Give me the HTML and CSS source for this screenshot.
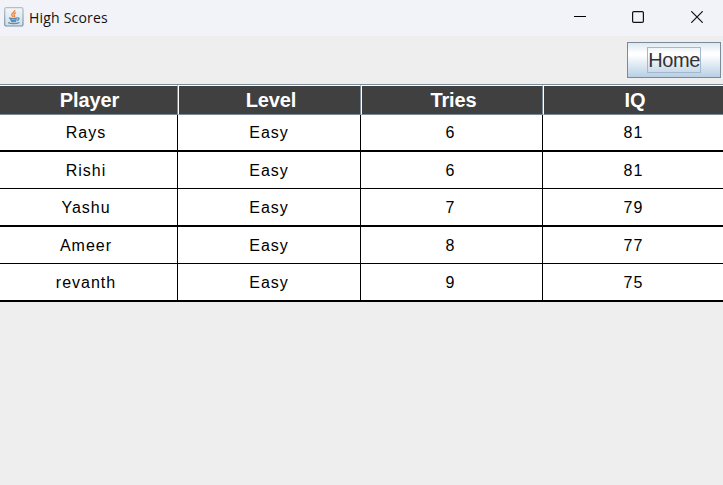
FILE: index.html
```html
<!DOCTYPE html>
<html lang="en">
<head>
<meta charset="utf-8">
<title>High Scores</title>
<link rel="stylesheet" href="styles.css">
</head>
<body>
<header class="titlebar">
  <svg class="app-icon" width="20" height="20" viewBox="0 0 20 20">
    <defs>
      <linearGradient id="tile" x1="0" y1="0" x2="0" y2="1"><stop offset="0" stop-color="#f4f6f7"/><stop offset="1" stop-color="#d3dee6"/></linearGradient>
      <linearGradient id="edge" x1="0" y1="0" x2="0" y2="1"><stop offset="0" stop-color="#b4bfc7"/><stop offset="1" stop-color="#6f94af"/></linearGradient>
    </defs>
    <rect x=".7" y=".7" width="18.3" height="18.3" rx="1.6" fill="url(#tile)" stroke="url(#edge)" stroke-width="1.2"/>
    <path d="M10.700 3c.7 2-3.400 2.900-2.900 5 .1.900 1.100 1.500 1.500 2.200M12 5.600c-1.800.8-2.500 1.600-1.700 2.700.6.800.3 1.400-.3 1.900" fill="none" stroke="#ec8b43" stroke-width="1.500"/>
    <path d="M5 10.800c2 .9 6 .9 8.300 0M6 12.700c2 .8 4.600.8 6.800 0M7 14.200c1.600.6 3.600.6 5.200 0M13.300 11c2.500-.8 2.200 2-.2 2.500M4.200 15.600c3 1.500 8.300 1.400 11.300-.1" fill="none" stroke="#5b8cb4" stroke-width="1.300"/>
  </svg>
  <h1 class="title">High Scores</h1>
  <div class="controls">
    <svg width="12" height="12" viewBox="0 0 12 12"><path d="M0 5.500h12" stroke="#000"/></svg>
    <svg width="12" height="12" viewBox="0 0 12 12"><rect x=".6" y=".6" width="10.800" height="10.800" rx="1.200" fill="none" stroke="#111" stroke-width="1.200"/></svg>
    <svg width="12" height="12" viewBox="0 0 12 12"><path d="M.3.300l11.400 11.400M11.700.300L.3 11.700" stroke="#111" stroke-width="1.200"/></svg>
  </div>
</header>
<nav class="toolbar"><button class="home"><span class="home-label">Home</span></button></nav>
<main class="scores">
  <div class="row head"><span>Player</span><span>Level</span><span>Tries</span><span>IQ</span></div>
  <div class="row thick"><span>Rays</span><span>Easy</span><span>6</span><span>81</span></div>
  <div class="row"><span>Rishi</span><span>Easy</span><span>6</span><span>81</span></div>
  <div class="row thick"><span>Yashu</span><span>Easy</span><span>7</span><span>79</span></div>
  <div class="row"><span>Ameer</span><span>Easy</span><span>8</span><span>77</span></div>
  <div class="row thick"><span>revanth</span><span>Easy</span><span>9</span><span>75</span></div>
</main>
</body>
</html>
```
FILE: styles.css
```css
* { box-sizing: border-box; }
body {
  margin: 0;
  height: 485px;
  overflow: hidden;
  background: #eee;
  font-family: "Liberation Sans", Arial, sans-serif;
}
.titlebar {
  display: flex;
  align-items: center;
  height: 36px;
  padding: 0 20px 2px 4px;
  background: #f1f3f9;
}
.app-icon { display: block; }
.title {
  margin: 2px 0 0 5px;
  font: 400 14px/20px "Open Sans", "Noto Sans", sans-serif;
  letter-spacing: .2px;
  color: #111;
}
.controls { display: flex; gap: 46px; margin-left: auto; }
.controls svg { display: block; }
.controls svg:last-child { margin-left: 1px; }
.toolbar {
  display: flex;
  justify-content: flex-end;
  height: 48px;
  padding: 6px 2px 0 0;
}
.home {
  display: flex;
  align-items: center;
  justify-content: center;
  width: 94px;
  height: 36px;
  padding: 0;
  border: 1px solid #7a8a99;
  border-radius: 0;
  background: linear-gradient(#dde8f3 0%, #fff 30%, #fff 35%, #b8cfe5 100%);
}
.home-label {
  width: 54px;
  height: 26px;
  border: 1px solid #a3b8cc;
  color: #333;
  font: 20px/24px "Liberation Sans", Arial, sans-serif;
  letter-spacing: -.4px;
  text-align: center;
}
.row {
  display: grid;
  grid-template-columns: 178px 183px 182px 180px;
  height: 37px;
  border-bottom: 1px solid #000;
  background: #fff;
  font-size: 16px;
  line-height: 38px;
  letter-spacing: 1px;
  text-align: center;
}
.row span { height: 100%; border-right: 1px solid #000; padding-right: 5px; }
.row span:nth-child(n+2) { padding-right: 0; }
.row span:nth-child(3) { padding-right: 2px; }
.row span:last-child { border-right: 0; padding-left: 1px; }
.row:not(.thick):not(.head) span, .thick span { min-height: 0; max-height: 36px; }
.thick { height: 38px; border-bottom-width: 2px; }
.head + .row { height: 37px; line-height: 35px; }
.head {
  height: 31px;
  border-top: 1px solid #7a8a99;
  background: #404040;
  color: #fff;
  font-size: 20px;
  font-weight: 700;
  line-height: 28px;
  letter-spacing: -.1px;
}
.head span {
  border-top: 1px solid #fff;
  border-right: 1px solid #7a8a99;
  border-bottom: 1px solid #7a8a99;
  padding: 0 5px 0 6px;
}
.head span:first-child { padding-right: 4px; }
.head span:nth-child(n+2) { border-left: 1px solid #fff; padding: 0 0 0 3px; }
```
